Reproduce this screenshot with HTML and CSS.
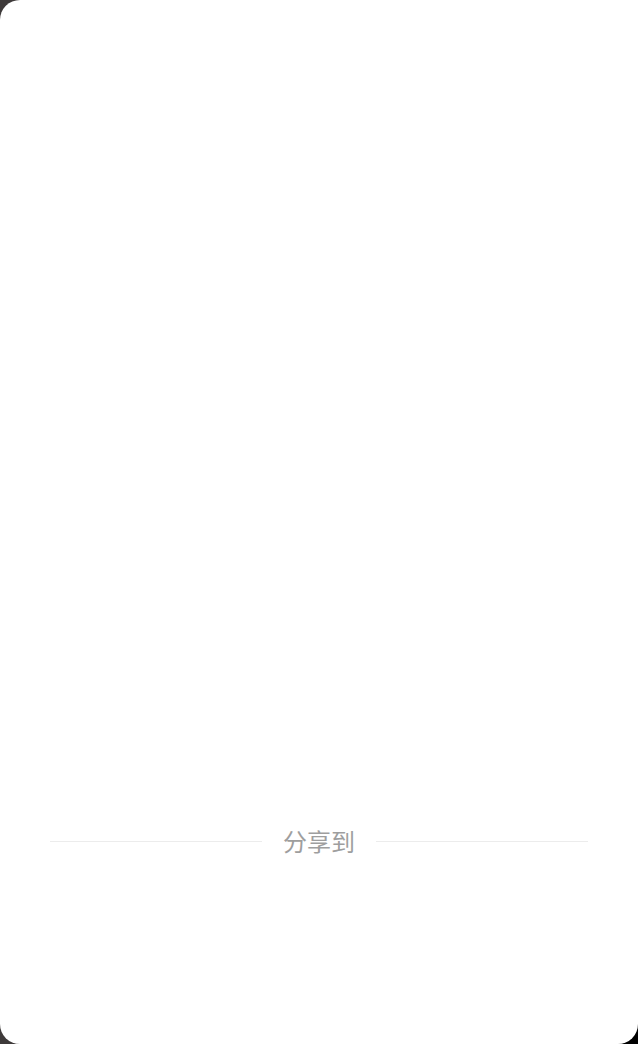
FILE: index.html
```html
<!DOCTYPE html>
<html lang="zh">
<head>
<meta charset="utf-8">
<link rel="stylesheet" href="styles.css">
</head>
<body>
<div class="sheet">
  <div class="content"></div>
  <div class="share">
    <span class="line"></span>
    <span class="label">分享到</span>
    <span class="line"></span>
  </div>
  <div class="targets"></div>
</div>
</body>
</html>
```

FILE: styles.css
```css
html, body {
  margin: 0;
  padding: 0;
  width: 638px;
  height: 1044px;
  overflow: hidden;
}
body {
  background: linear-gradient(to right, #3e3a3a 0%, #3e3a3a 88%, #000 96%, #000 100%);
  font-family: "Noto Sans CJK SC", "Noto Sans", sans-serif;
}
.sheet {
  width: 638px;
  height: 1044px;
  background: #fff;
  border-radius: 20px 0 20px 20px;
  display: flex;
  flex-direction: column;
}
.content {
  flex: 0 0 817px;
}
.share {
  display: flex;
  align-items: center;
  padding: 0 50px;
  height: 48px;
}
.line {
  flex: 1;
  height: 1px;
  background: #ececec;
}
.label {
  margin: 0 21px;
  font-size: 24px;
  line-height: 48px;
  color: #9e9e9e;
}
.targets {
  flex: 1;
}
```
